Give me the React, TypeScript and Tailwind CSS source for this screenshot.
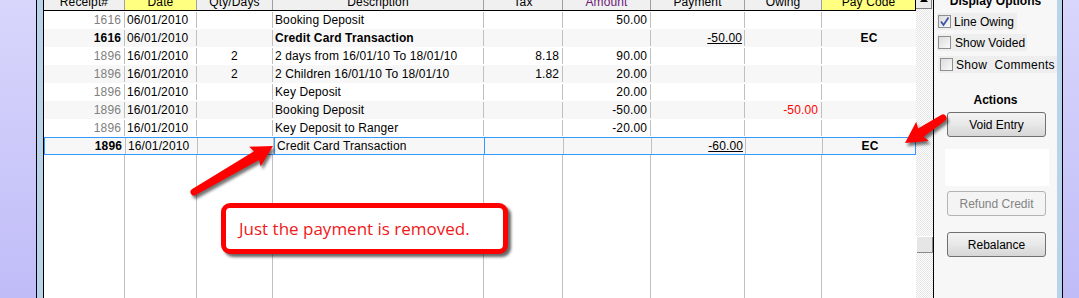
const cols = "grid grid-cols-[81px_72px_76px_211px_79px_88px_94px_77px_94px]";

type Row = {
  receipt: string;
  date: string;
  qty?: string;
  desc: string;
  tax?: string;
  amount?: string;
  payment?: string;
  owing?: string;
  code?: string;
  bold?: boolean;
  boldDesc?: boolean;
  selected?: boolean;
};

const rows: Row[] = [
  { receipt: "1616", date: "06/01/2010", desc: "Booking Deposit", amount: "50.00" },
  { receipt: "1616", date: "06/01/2010", desc: "Credit Card Transaction", payment: "-50.00", code: "EC", bold: true, boldDesc: true },
  { receipt: "1896", date: "16/01/2010", qty: "2", desc: "2 days from 16/01/10 To 18/01/10", tax: "8.18", amount: "90.00" },
  { receipt: "1896", date: "16/01/2010", qty: "2", desc: "2 Children 16/01/10 To 18/01/10", tax: "1.82", amount: "20.00" },
  { receipt: "1896", date: "16/01/2010", desc: "Key Deposit", amount: "20.00" },
  { receipt: "1896", date: "16/01/2010", desc: "Booking Deposit", amount: "-50.00", owing: "-50.00" },
  { receipt: "1896", date: "16/01/2010", desc: "Key Deposit to Ranger", amount: "-20.00" },
  { receipt: "1896", date: "16/01/2010", desc: "Credit Card Transaction", payment: "-60.00", code: "EC", bold: true, selected: true },
];

const headers = ["Receipt#", "Date", "Qty/Days", "Description", "Tax", "Amount", "Payment", "Owing", "Pay Code"];

function Arrow({ x1, y1, x2, y2 }: { x1: number; y1: number; x2: number; y2: number }) {
  const len = Math.hypot(x2 - x1, y2 - y1);
  const ang = (Math.atan2(y2 - y1, x2 - x1) * 180) / Math.PI;
  const h = len - 19;
  return (
    <g transform={`translate(${x1} ${y1}) rotate(${ang})`}>
      <path
        d={`M0 -3.5 L${h} -5 L${h - 2} -11.5 L${len} 0 L${h - 2} 11.5 L${h} 5 L0 3.5 A3.5 3.5 0 0 1 0 -3.5 Z`}
        fill="#ff0000"
      />
    </g>
  );
}

function Check({ checked }: { checked?: boolean }) {
  return (
    <span className="flex h-[13px] w-[13px] shrink-0 items-center justify-center border border-[#8e8f8f] bg-gradient-to-br from-[#dcdcdc] to-[#fafafa]">
      {checked && (
        <svg width="11" height="11" viewBox="0 0 11 11">
          <path d="M2 5.5 L4.5 9 L9.5 1.5" fill="none" stroke="#3b55a6" strokeWidth="1.8" />
        </svg>
      )}
    </span>
  );
}

function Btn({ label, disabled }: { label: string; disabled?: boolean }) {
  return (
    <div
      className={
        disabled
          ? "ml-[13px] flex h-[25px] w-[99px] items-center justify-center rounded-[3px] border border-[#b4b4b4] bg-[#f4f4f4] text-[#838383]"
          : "ml-[13px] flex h-[25px] w-[99px] items-center justify-center rounded-[3px] border border-[#707070] bg-gradient-to-b from-[#f4f4f4] via-[#e8e8e8] to-[#d6d6d6] text-black"
      }
    >
      {label}
    </div>
  );
}

export default function App() {
  return (
    <div className="relative flex h-[298px] w-[1079px] overflow-hidden bg-white font-['Liberation_Sans',Arial,sans-serif] text-[12px] text-black">
      <div className="w-[36px] bg-gradient-to-b from-[#d8d6fb] to-[#c0bcf8]" />
      <div className="w-px bg-black" />
      <div className="w-[6px] bg-[#b9d3ea]" />
      <div className="w-px bg-black" />

      {/* grid */}
      <div className="flex w-[872px] flex-col tracking-[0.12px]">
        <div className={`${cols} h-[11px] border-b border-black`}>
          {headers.map((h, i) => (
            <div
              key={h}
              className={`overflow-hidden text-center leading-[12px] ${
                i === 1 || i === 8 ? "bg-[#ffff80]" : "bg-[#f0f0f0]"
              } ${i === 8 ? "border-r border-black" : "border-r border-[#a0a0a0]"} ${
                i === 5 ? "text-[#6b1a7a]" : ""
              }`}
            >
              <div className="-mt-[4px]">{h}</div>
            </div>
          ))}
        </div>
        {rows.map((r, i) => (
          <div
            key={i}
            className={`${cols} h-[18px] leading-[16px] ${i % 2 ? "bg-[#f7f7f7]" : "bg-white"} ${
              r.selected ? "border border-[#3399ff]" : "border-y border-transparent"
            }`}
          >
            <div className={`border-r border-[#c0c0c0] pr-[3px] text-right ${r.bold ? "font-bold text-black" : "text-[#808080]"}`}>
              {r.receipt}
            </div>
            <div className="border-r border-[#c0c0c0] pl-[2px]">{r.date}</div>
            <div className="border-r border-[#c0c0c0] text-center">{r.qty}</div>
            <div
              className={`truncate pl-[2px] ${r.boldDesc ? "font-bold" : ""} ${
                r.selected ? "-my-px border border-[#3399ff] leading-[16px]" : "border-r border-[#c0c0c0]"
              }`}
            >
              {r.desc}
            </div>
            <div className="border-r border-[#c0c0c0] pr-[3px] text-right">{r.tax}</div>
            <div className="border-r border-[#c0c0c0] pr-[3px] text-right">{r.amount}</div>
            <div className="border-r border-[#c0c0c0] pr-[2px] text-right underline">{r.payment}</div>
            <div className="border-r border-[#c0c0c0] pr-[3px] text-right text-[#ff0000]">{r.owing}</div>
            <div className="text-center font-bold">{r.code}</div>
          </div>
        ))}
        <div className={`${cols} flex-1`}>
          {headers.map((h, i) => (
            <div key={h} className={i < 8 ? "border-r border-[#c0c0c0]" : ""} />
          ))}
        </div>
      </div>

      {/* scrollbar */}
      <div className="flex w-[17px] flex-col bg-[repeating-conic-gradient(#ffffff_0_25%,#e4e4e4_0_50%)] bg-[length:2px_2px]">
        <div className="relative h-[9px] w-[16px] overflow-hidden border-r border-b border-[#808080] bg-[#ececec]">
          <div className="absolute left-[4px] -top-[3px] h-0 w-0 border-x-[4px] border-b-[5px] border-x-transparent border-b-black" />
        </div>
        <div className="mt-[227px] h-[17px] w-[17px] border-t border-l border-white bg-[#e6e6e6] shadow-[inset_-1px_-1px_0_#8a8a8a]" />
      </div>
      <div className="w-px bg-black" />

      {/* right panel */}
      <div className="flex w-[123px] flex-col bg-[#f7f7f7]">
        <div className="-mt-[5px] text-center font-bold leading-[12px]">Display Options</div>
        <div className="mt-[6px] ml-[3px] flex h-[17px] w-[80px] items-center bg-[#eeeeee] pl-px">
          <Check checked />
          <span className="ml-[3px]">Line Owing</span>
        </div>
        <div className="mt-[4px] ml-[3px] flex h-[17px] w-[90px] items-center bg-[#eeeeee] pl-px">
          <Check />
          <span className="ml-[4px]">Show Voided</span>
        </div>
        <div className="mt-[5px] ml-[4px] flex h-[17px] w-[119px] items-center whitespace-pre bg-[#eeeeee] pl-[2px]">
          <Check />
          <span className="ml-[3px] tracking-[0.3px]">Show  Comments</span>
        </div>
        <div className="mt-[21px] text-center font-bold leading-[12px]">Actions</div>
        <div className="mt-[6px]">
          <Btn label="Void Entry" />
        </div>
        <div className="mt-[12px] ml-[11px] h-[37px] w-[104px] bg-white" />
        <div className="mt-[5px]">
          <Btn label="Refund Credit" disabled />
        </div>
        <div className="mt-[16px]">
          <Btn label="Rebalance" />
        </div>
      </div>
      <div className="w-[5px] bg-[#b9d3ea]" />
      <div className="w-px bg-black" />
      <div className="flex-1 bg-gradient-to-b from-[#d8d6fb] to-[#c0bcf8]" />

      {/* annotations */}
      <svg
        className="pointer-events-none absolute left-0 top-0 drop-shadow-[2px_3px_1.5px_rgba(0,0,0,0.55)]"
        width="1079"
        height="298"
      >
        <Arrow x1={194} y1={192} x2={273} y2={146} />
        <Arrow x1={943} y1={118} x2={905} y2={143} />
      </svg>
      <div className="absolute left-[221px] top-[203px] flex h-[51px] w-[287px] items-center rounded-[9px] border-[5px] border-[#ff0000] bg-white pl-[13px] font-['Open_Sans',sans-serif] text-[17px] text-[#f01818] shadow-[3px_3px_3px_rgba(0,0,0,0.6)]">
        Just the payment is removed.
      </div>
    </div>
  );
}
